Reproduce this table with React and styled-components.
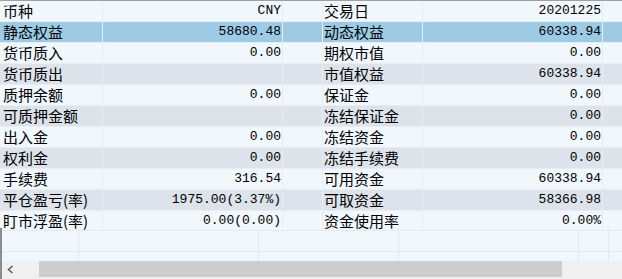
import React from 'react'
import styled, { createGlobalStyle } from 'styled-components'

const GlobalStyle = createGlobalStyle`
    html, body {
        margin: 0;
        padding: 0;
        background: #ffffff;
    }
`

const tones = {
    light: '#f0f7fd',
    gray: '#dde3ea',
    selected: '#9dcbe5',
}

const Frame = styled.div`
    width: 622px;
    height: 279px;
    box-sizing: border-box;
    border-top: 1px solid #a0a0a0;
    background: #f0f7fd;
    display: flex;
    flex-direction: column;
    overflow: hidden;
`

const DataTable = styled.div`
    height: 227px;
    flex: none;
`

const Row = styled.div`
    display: grid;
    grid-template-columns: 103px 180px 40px 100px 180px 1fr;
    height: ${props => props.$h}px;
    box-sizing: border-box;
    border-bottom: ${props => (props.$h === 21 ? '1px solid #e8edf2' : 'none')};
    background: ${props => tones[props.$tone]};
`

const Cell = styled.div`
    box-sizing: border-box;
    border-right: 1px solid #e8edf2;
    line-height: 19px;
    white-space: nowrap;
    color: #000000;

    &:last-child {
        border-right: none;
    }
`

const Label = styled(Cell)`
    font-family: "Noto Sans CJK SC", "Liberation Sans", sans-serif;
    font-size: 15px;
    padding-left: ${props => props.$indent}px;
`

const Value = styled(Cell)`
    font-family: "Liberation Mono", "Noto Sans CJK SC", monospace;
    font-size: 13px;
    text-align: right;
    padding-right: 1px;
`

const Filler = styled.div`
    flex: none;
    border-left: 2px solid #8c8c8c;
`

const FillerRow = styled.div`
    display: grid;
    grid-template-columns: 77px 180px 140px 180px 30px 1fr;
    height: ${props => props.$h}px;
    box-sizing: border-box;
    border-bottom: ${props => (props.$line ? '1px solid #e4e9ee' : 'none')};
`

const FillerCell = styled.div`
    border-right: 1px solid #e4e9ee;

    &:last-child {
        border-right: none;
    }
`

const ScrollBar = styled.div`
    flex: none;
    height: 16px;
    display: flex;
    border-left: 2px solid #8c8c8c;
    background: #f0f0f0;
`

const ArrowButton = styled.div`
    width: 37px;
    display: flex;
    align-items: center;
    padding-left: 5px;
    box-sizing: border-box;
    background: #f0f0f0;
`

const Thumb = styled.div`
    width: 523px;
    background: #cdcdcd;
`

const Track = styled.div`
    flex: 1;
    background: #f0f0f0;
`

const BottomEdge = styled.div`
    flex: 1;
    background: #f0f0f0;
    border-left: 2px solid #8c8c8c;
`

const rows = [
    ['币种', 'CNY', '交易日', '20201225'],
    ['静态权益', '58680.48', '动态权益', '60338.94'],
    ['货币质入', '0.00', '期权市值', '0.00'],
    ['货币质出', '', '市值权益', '60338.94'],
    ['质押余额', '0.00', '保证金', '0.00'],
    ['可质押金额', '', '冻结保证金', '0.00'],
    ['出入金', '0.00', '冻结资金', '0.00'],
    ['权利金', '0.00', '冻结手续费', '0.00'],
    ['手续费', '316.54', '可用资金', '60338.94'],
    ['平仓盈亏(率)', '1975.00(3.37%)', '可取资金', '58366.98'],
    ['盯市浮盈(率)', '0.00(0.00)', '资金使用率', '0.00%'],
]

const toneFor = i => (i === 1 ? 'selected' : i % 2 === 0 ? 'light' : 'gray')

const EmptyCells = () => (
    <>
        {[0, 1, 2, 3, 4, 5].map(i => <FillerCell key={i} />)}
    </>
)

const App = () => (
    <>
        <GlobalStyle />
        <Frame>
            <DataTable>
                {rows.map(([l1, v1, l2, v2], i) => (
                    <Row key={l1} $tone={toneFor(i)} $h={i === rows.length - 1 ? 17 : 21}>
                        <Label $indent={3}>{l1}</Label>
                        <Value>{v1}</Value>
                        <Cell />
                        <Label $indent={1}>{l2}</Label>
                        <Value>{v2}</Value>
                        <Cell />
                    </Row>
                ))}
            </DataTable>
            <Filler>
                <FillerRow $h={3} $line><EmptyCells /></FillerRow>
                <FillerRow $h={21} $line><EmptyCells /></FillerRow>
                <FillerRow $h={9}><EmptyCells /></FillerRow>
            </Filler>
            <ScrollBar>
                <ArrowButton>
                    <svg width="7" height="9" viewBox="0 0 7 9">
                        <polyline points="5.5,1 1.5,4.5 5.5,8" fill="none" stroke="#606060" strokeWidth="1.6" />
                    </svg>
                </ArrowButton>
                <Thumb />
                <Track />
            </ScrollBar>
            <BottomEdge />
        </Frame>
    </>
)

export default App
